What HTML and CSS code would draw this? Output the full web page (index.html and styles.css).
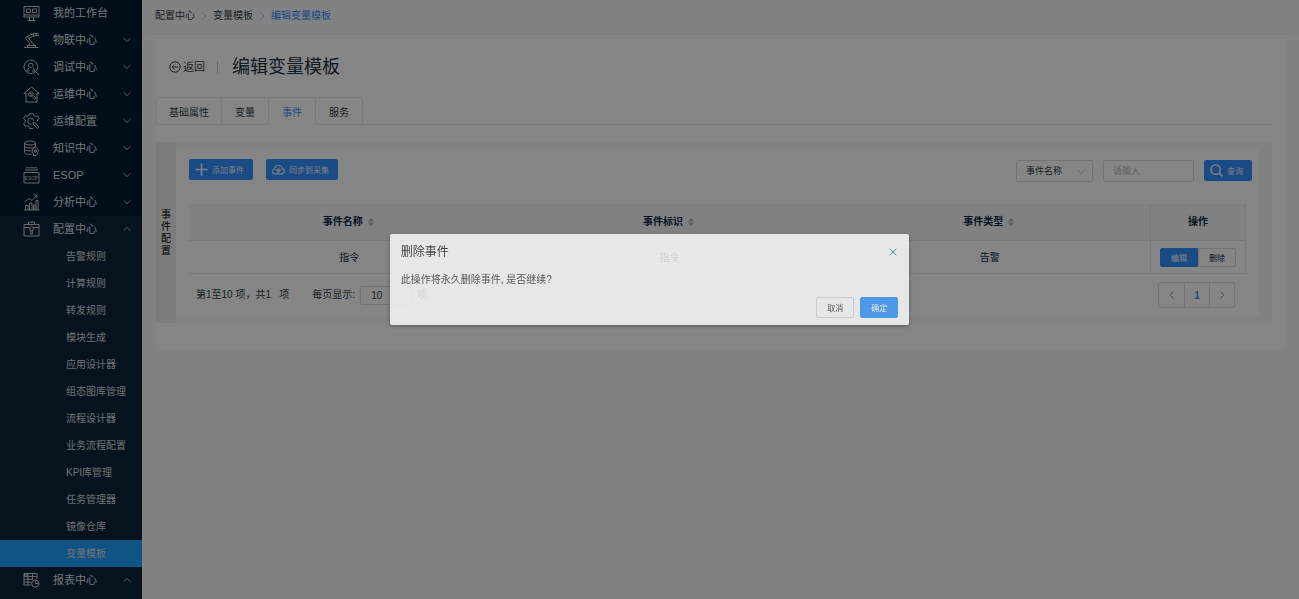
FILE: index.html
```html
<!DOCTYPE html>
<html lang="zh-CN">
<head>
    <meta charset="UTF-8">
    <meta name="viewport" content="width=device-width, initial-scale=1.0">
    <title>编辑变量模板</title>
    <link rel="stylesheet" href="styles.css">
</head>
<body>
    <svg class="defs" aria-hidden="true">
        <symbol id="down" viewBox="0 0 10 10"><path d="M1.5 3.2 5 6.6l3.5-3.4"/></symbol>
        <symbol id="up" viewBox="0 0 10 10"><path d="M1.5 6.8 5 3.4l3.5 3.4"/></symbol>
        <symbol id="left" viewBox="0 0 10 10"><path d="M6.6 1.5 3.2 5l3.4 3.5"/></symbol>
        <symbol id="right" viewBox="0 0 10 10"><path d="M3.4 1.5 6.8 5 3.4 8.5"/></symbol>
        <symbol id="sort" viewBox="0 0 8 10"><path d="M4 .8 7.2 4.4H.8zM4 9.2.8 5.6h6.4z"/></symbol>
    </svg>
    <div class="layout">
        <nav class="sidebar">
            <a href="#" class="menu-item">
                <svg class="menu-icon" viewBox="0 0 17 17"><path d="M1 1.500h15v10.500H1zM1 10h15M3.500 4h4v3.500h-4zM9.500 4h4v3.500h-4zM6.500 12v3M10.500 12v3M4.500 15.500h8"/></svg>
                <span>我的工作台</span>
            </a>
            <a href="#" class="menu-item">
                <svg class="menu-icon" viewBox="0 0 17 17"><path d="M1 15.500h14.500M4.500 15.500v-2h8v2M6 13.500c0-4 5-4 5 0M6.500 11 3.200 7.200M9 10.300 5.500 6.500M3 7.200C1.800 5.200 4.200 3.800 5.500 5.800M3.500 5 10.500 1.500M5.500 6.500l5.500-3M10.500 1.200v3l2.500-.5V1.500zM13 1.800l2.500-.8M13 3.500h3"/></svg>
                <span>物联中心</span>
                <svg class="arrow"><use href="#down"/></svg>
            </a>
            <a href="#" class="menu-item">
                <svg class="menu-icon" viewBox="0 0 17 17"><circle cx="7.800" cy="7.800" r="6.800"/><path d="m12.700 12.700 3.500 3.500M5.500 6.500a2.300 2.300 0 1 1 4.600 0c0 1.500-1.200 2-2.300 2s-2.300-.5-2.300-2M4 12.500v-2l2-1M11.600 12.500v-2l-2-1M4 12h2.500M9 12h2.600"/></svg>
                <span>调试中心</span>
                <svg class="arrow"><use href="#down"/></svg>
            </a>
            <a href="#" class="menu-item">
                <svg class="menu-icon" viewBox="0 0 17 17"><path d="M3 7.500H.8L8.500 1l7.700 6.500H14V16H3zM9 10.500l3 3M10.300 9.200l2.900 3-1.200 1.300M6 7l2 .3.300 2-1.500.8c2 1 4.200-1.500 2.700-3.600C8.700 5.400 7 5.600 6 7zM6 7c-1 1.200-.7 2.600.8 3.100"/></svg>
                <span>运维中心</span>
                <svg class="arrow"><use href="#down"/></svg>
            </a>
            <a href="#" class="menu-item">
                <svg class="menu-icon" viewBox="0 0 17 17"><path d="M10 15.500H6.500L6 13.500l-1.800-.9-2 .7L.7 10.500l1.500-1.500v-2L.7 5.500l1.500-2.700 2 .6L6 2.500 6.500.7h3.600l.6 1.800 1.700.9 2-.6 1.500 2.700L14.400 7v1.800M10.800 8a3 3 0 1 0-2.200 3M10 9.500l2 .3 3.800 4-1.400 1.700-4-4z"/></svg>
                <span>运维配置</span>
                <svg class="arrow"><use href="#down"/></svg>
            </a>
            <a href="#" class="menu-item">
                <svg class="menu-icon" viewBox="0 0 17 17"><ellipse cx="7" cy="3" rx="5.500" ry="2"/><path d="M1.500 3v3c0 2.700 11 2.700 11 0V3M1.500 6v3c0 1.500 4 2.200 7 1.700M1.500 9v3.500c0 1.500 4 2.200 7 1.700M12.500 6v1M10 8.500c2-1.500 5.500-.5 5.500 2 0 1.500-1 2-1 3l-1 2h-3v-2l-1.500-1zM11.500 10h2v2h-2z"/></svg>
                <span>知识中心</span>
                <svg class="arrow"><use href="#down"/></svg>
            </a>
            <a href="#" class="menu-item">
                <svg class="menu-icon" viewBox="0 0 17 17"><path d="M3 .8h11M2 3h13M1 5.500h15V16H1z"/><text x="8.500" y="13" text-anchor="middle">ESOP</text></svg>
                <span>ESOP</span>
                <svg class="arrow"><use href="#down"/></svg>
            </a>
            <a href="#" class="menu-item">
                <svg class="menu-icon" viewBox="0 0 17 17"><path d="M.8 16h15.500M2.500 16v-4.500H5V16M6.500 16V9H9v7M10.500 16v-5H12v5M13 16V6.500h2V16M1.500 8 6 4.500l3 2 4.500-5M10.800 1h3v3"/></svg>
                <span>分析中心</span>
                <svg class="arrow"><use href="#down"/></svg>
            </a>
            <div class="menu-group">
                <a href="#" class="menu-item">
                    <svg class="menu-icon" viewBox="0 0 17 17"><path d="M1 3.500h15V15H1zM5.500 3.500V1.200h6v2.300M1 6.500h5.500M10.500 6.500H16M8.500 5.200l2 1.600-.9 3H7.400l-.9-3zM7.700 10v3h1.600v-3"/></svg>
                    <span>配置中心</span>
                    <svg class="arrow"><use href="#up"/></svg>
                </a>
                <a href="#" class="sub-item">告警规则</a>
                <a href="#" class="sub-item">计算规则</a>
                <a href="#" class="sub-item">转发规则</a>
                <a href="#" class="sub-item">模块生成</a>
                <a href="#" class="sub-item">应用设计器</a>
                <a href="#" class="sub-item">组态图库管理</a>
                <a href="#" class="sub-item">流程设计器</a>
                <a href="#" class="sub-item">业务流程配置</a>
                <a href="#" class="sub-item">KPI库管理</a>
                <a href="#" class="sub-item">任务管理器</a>
                <a href="#" class="sub-item">镜像仓库</a>
                <a href="#" class="sub-item active">变量模板</a>
            </div>
            <div class="menu-group last">
                <a href="#" class="menu-item">
                    <svg class="menu-icon" viewBox="0 0 17 17"><path d="M8.500 13H1V1.500h13V7M1 4.500h13M1 7.300h9M1 10.200h7.500M5 1.500V13M9.500 1.500v6M1.500 2h3v2h-3z"/><circle cx="12.300" cy="11.500" r="3.600"/><path d="M12.300 8v3.500h3.600"/></svg>
                    <span>报表中心</span>
                    <svg class="arrow"><use href="#up"/></svg>
                </a>
            </div>
        </nav>

        <main class="main">
            <div class="breadcrumb">
                <a href="#">配置中心</a>
                <svg class="crumb-sep"><use href="#right"/></svg>
                <a href="#">变量模板</a>
                <svg class="crumb-sep"><use href="#right"/></svg>
                <a href="#" class="current">编辑变量模板</a>
            </div>

            <div class="card">
                <div class="page-header">
                    <a href="#" class="back">
                        <svg class="back-icon" viewBox="0 0 12 12"><circle cx="6" cy="6" r="5.200"/><path d="M9 6H3.200M5.500 3.700 3.200 6l2.300 2.300"/></svg>
                        返回
                    </a>
                    <h1>编辑变量模板</h1>
                </div>

                <div class="tabs">
                    <button class="tab">基础属性</button>
                    <button class="tab">变量</button>
                    <button class="tab active">事件</button>
                    <button class="tab">服务</button>
                </div>

                <section class="panel">
                    <div class="panel-side"><span>事件配置</span></div>
                    <div class="panel-body">
                        <div class="toolbar">
                            <button class="btn primary">
                                <svg class="btn-icon plus" viewBox="0 0 12 12"><path d="M6 .5v11M.5 6h11"/></svg>
                                添加事件
                            </button>
                            <button class="btn primary sync">
                                <svg class="btn-icon" viewBox="0 0 12 12"><path d="M3 10C-.2 10-.2 6 2.500 5.700 2.500 1.500 8.800 1 9.300 5.200c3 .3 3 4.800 0 4.800zM4 7.500c0-2.500 3.500-2.500 4-.3"/><circle cx="6" cy="7.700" r="1"/></svg>
                                同步到采集
                            </button>
                            <div class="search">
                                <div class="select-wrap">
                                    <select aria-label="查询字段">
                                        <option>事件名称</option>
                                    </select>
                                    <svg class="select-arrow"><use href="#down"/></svg>
                                </div>
                                <input type="text" placeholder="请输入" aria-label="查询内容">
                                <button class="btn primary query">
                                    <svg class="btn-icon glass" viewBox="0 0 12 12"><circle cx="5.200" cy="5.200" r="4.300"/><path d="m8.400 8.400 3 3"/></svg>
                                    查询
                                </button>
                            </div>
                        </div>

                        <table>
                            <thead>
                                <tr>
                                    <th>事件名称<svg class="sort"><use href="#sort"/></svg></th>
                                    <th>事件标识<svg class="sort"><use href="#sort"/></svg></th>
                                    <th>事件类型<svg class="sort"><use href="#sort"/></svg></th>
                                    <th class="action">操作</th>
                                </tr>
                            </thead>
                            <tbody>
                                <tr>
                                    <td>指令</td>
                                    <td>指令</td>
                                    <td>告警</td>
                                    <td class="action">
                                        <div class="btn-group">
                                            <button class="edit">编辑</button>
                                            <button>删除</button>
                                        </div>
                                    </td>
                                </tr>
                            </tbody>
                        </table>

                        <div class="table-footer">
                            <span>第1至10 项，共1&nbsp;&nbsp; 项</span>
                            <label for="pageSize">每页显示:</label>
                            <div class="select-wrap size">
                                <select id="pageSize">
                                    <option>10</option>
                                </select>
                                <svg class="select-arrow"><use href="#down"/></svg>
                            </div>
                            <span>项</span>
                            <div class="pager">
                                <button aria-label="上一页"><svg><use href="#left"/></svg></button>
                                <button class="current">1</button>
                                <button aria-label="下一页"><svg><use href="#right"/></svg></button>
                            </div>
                        </div>
                    </div>
                </section>
            </div>
        </main>
    </div>

    <div class="overlay">
        <div class="dialog" role="dialog" aria-labelledby="dialogTitle">
            <div class="dialog-header">
                <h2 id="dialogTitle">删除事件</h2>
                <button class="close" aria-label="关闭"><svg viewBox="0 0 8 8"><path d="m.8.8 6.400 6.400M7.200.8.8 7.200"/></svg></button>
            </div>
            <p>此操作将永久删除事件, 是否继续?</p>
            <div class="dialog-footer">
                <button class="btn">取消</button>
                <button class="btn confirm">确定</button>
            </div>
        </div>
    </div>
</body>
</html>
```
FILE: styles.css
```css
* {
    box-sizing: border-box;
}

body {
    margin: 0;
    font-family: "Liberation Sans", "Noto Sans CJK SC", sans-serif;
    font-size: 10px;
    line-height: 14px;
    color: #303f4a;
    background-color: #f6f9fc;
}

a {
    color: inherit;
    text-decoration: none;
}

button, input, select {
    font-family: inherit;
    font-size: 10px;
    color: inherit;
    margin: 0;
    padding: 0;
    border: 0;
    background: none;
}

button {
    cursor: pointer;
}

svg {
    fill: none;
    stroke: currentColor;
    stroke-width: 1;
    flex: none;
}

.defs {
    display: none;
}

.layout {
    display: flex;
    height: 100vh;
    overflow: hidden;
}

/* Sidebar */
.sidebar {
    display: flex;
    flex-direction: column;
    flex: none;
    width: 142px;
    background-color: #021a2e;
    color: #dce0e4;
}

.menu-item {
    display: flex;
    align-items: center;
    height: 27px;
    padding: 0 10px 1px 23px;
    font-size: 11px;
    flex: none;
}

.menu-icon {
    width: 17px;
    height: 17px;
    margin-right: 13px;
    color: #c3c9ce;
}

.menu-icon text {
    font-size: 5px;
    fill: currentColor;
    stroke: none;
}

.arrow {
    width: 10px;
    height: 10px;
    margin-left: auto;
    color: #a9b0b7;
}

.menu-group {
    background-color: #0d253a;
}

.menu-group.last {
    flex: 1;
}

.sub-item {
    display: block;
    height: 27px;
    line-height: 28px;
    padding-left: 66px;
    color: #d3d9de;
}

.sub-item.active {
    background-color: #20a0ff;
}

/* Content */
.main {
    flex: 1;
    min-width: 0;
}

.breadcrumb {
    display: flex;
    align-items: center;
    gap: 4px;
    height: 34px;
    padding: 0 13px 1px;
    border-bottom: 1px solid #eef0f2;
}

.breadcrumb .current {
    color: #3490ff;
}

.crumb-sep {
    width: 10px;
    height: 10px;
    color: #b4bbc2;
}

.card {
    margin: 5px 14px 0;
    padding: 12px 13px 27px 0;
    background-color: #fff;
}

.page-header {
    display: flex;
    align-items: center;
    height: 31px;
    padding-left: 13px;
}

.back {
    display: flex;
    align-items: center;
    gap: 2px;
    font-size: 11px;
    padding-right: 13px;
    background: linear-gradient(#c5cacf, #c5cacf) right center / 1px 12px no-repeat;
}

.back-icon {
    width: 12px;
    height: 12px;
}

h1 {
    margin: 0 0 0 14px;
    font-size: 18px;
    line-height: 28px;
    font-weight: normal;
    color: #1b3344;
}

.tabs {
    display: flex;
    margin-top: 15px;
    border-bottom: 1px solid #ebedf0;
}

.tab {
    min-width: 47px;
    height: 28px;
    padding: 0 12px;
    margin-bottom: -1px;
    border: 1px solid #e8eaed;
    border-left-width: 0;
}

.tab:first-child {
    border-left-width: 1px;
    border-radius: 3px 0 0 0;
}

.tab:last-child {
    border-radius: 0 3px 0 0;
}

.tab.active {
    color: #3490ff;
    border-bottom-color: #fff;
}

.panel {
    display: flex;
    margin-top: 17px;
    padding: 7px 13px 7px 0;
    background-color: #f9f9f9;
}

.panel-side {
    display: flex;
    align-items: center;
    justify-content: center;
    width: 20px;
    margin: -7px 0;
    background-color: #eee;
    border-radius: 3px 0 0 3px;
}

.panel-side span {
    width: 10px;
    line-height: 12px;
    color: #000;
}

.panel-body {
    flex: 1;
    min-width: 0;
    padding: 10px 13px 8px;
    background-color: #fff;
}

/* Buttons */
.btn {
    display: flex;
    align-items: center;
    justify-content: center;
    gap: 4px;
    height: 21px;
    padding: 0 10px;
    font-size: 8px;
    border: 1px solid #d8dce5;
    border-radius: 2px;
}

.btn.primary {
    height: 21px;
    padding: 0 9px 0 6px;
    color: #e8f2ff;
    background-color: #3490ff;
    border: 0;
}

.btn-icon {
    width: 13px;
    height: 13px;
}

.btn-icon.plus, .btn-icon.glass {
    stroke-width: 1.5;
}

.toolbar {
    display: flex;
    align-items: flex-start;
    margin-right: -6px;
    height: 45px;
}

.sync {
    margin-left: 13px;
}

.search {
    display: flex;
    gap: 10px;
    margin: 1px 0 0 auto;
}

.search select, .search input {
    height: 22px;
    padding: 0 9px;
    border: 1px solid #d8dce5;
    border-radius: 2px;
    background-color: #fff;
    font-size: 9px;
}

.search select {
    width: 77px;
}

.search input {
    width: 91px;
}

input::placeholder {
    color: #b4bccc;
    opacity: 1;
}

.select-wrap {
    position: relative;
    height: 22px;
}

select {
    appearance: none;
}

.select-arrow {
    position: absolute;
    right: 7px;
    top: 7px;
    width: 10px;
    height: 10px;
    color: #b4bccc;
    pointer-events: none;
}

/* Table */
table {
    width: 100%;
    table-layout: fixed;
    border-collapse: separate;
    border-spacing: 0;
    text-align: center;
}

th {
    height: 37px;
    padding: 0;
    background-color: #f5f8fb;
    border-bottom: 1px solid #e6ebf2;
    color: #0d2b45;
}

th:not(:last-child) {
    border-right: 1px solid #f0f3f7;
}

td {
    height: 33px;
    padding: 1px 0 0;
    border-bottom: 1px solid #e6ebf2;
    color: #0d2b45;
}

.action {
    width: 96px;
    border-left: 1px solid #e6ebf2;
    border-right: 1px solid #e6ebf2;
}

.sort {
    width: 8px;
    height: 10px;
    margin-left: 4px;
    vertical-align: -2px;
    fill: #b4bccc;
    stroke: none;
}

.btn-group {
    display: flex;
    justify-content: center;
}

.btn-group button {
    width: 38px;
    height: 19px;
    font-size: 8px;
    border: 1px solid #d8dce5;
    border-radius: 0 2px 2px 0;
}

.btn-group .edit {
    color: #fff;
    background-color: #3490ff;
    border-color: #3490ff;
    border-radius: 2px 0 0 2px;
}

.table-footer {
    display: flex;
    align-items: center;
    height: 26px;
    margin-top: 8px;
    padding: 0 11px 0 7px;
}

.table-footer label {
    margin-left: 23px;
}

.size {
    height: 19px;
    margin: 0 4px 0 5px;
}

.size select {
    width: 53px;
    height: 19px;
    padding-left: 10px;
    border: 1px solid #d8dce5;
    border-radius: 2px;
}

.size .select-arrow {
    top: 5px;
}

.pager {
    display: flex;
    margin-left: auto;
    border: 1px solid #d8e0ec;
    border-radius: 2px;
}

.pager button {
    width: 25px;
    height: 24px;
}

.pager button + button {
    border-left: 1px solid #d8e0ec;
}

.pager svg {
    display: block;
    width: 10px;
    height: 10px;
    margin: 0 auto;
    color: #8d98a5;
}

.pager .current {
    color: #3490ff;
    font-weight: bold;
}

/* Confirm dialog */
.overlay {
    position: fixed;
    inset: 0;
    display: flex;
    align-items: center;
    justify-content: center;
    padding-bottom: 40px;
    background-color: rgba(0, 0, 0, 0.48);
}

.dialog {
    width: 40%;
    padding: 11px 11px 7px;
    background-color: #fff;
    border-radius: 2px;
    box-shadow: 0 1px 4px rgba(0, 0, 0, 0.4);
    color: #484c52;
    opacity: 0.8;
}

.dialog-header {
    display: flex;
    align-items: center;
    justify-content: space-between;
}

.dialog h2 {
    margin: 0;
    font-size: 12px;
    line-height: 14px;
    font-weight: normal;
    color: #303133;
}

.close {
    display: flex;
    padding: 1px;
    color: #2b8fc4;
}

.close svg {
    width: 8px;
    height: 8px;
}

.dialog p {
    margin: 14px 0 10px;
}

.dialog-footer {
    display: flex;
    justify-content: flex-end;
    gap: 6px;
}

.dialog-footer .btn {
    width: 38px;
    padding: 0;
}

.dialog-footer .confirm {
    color: #fff;
    background-color: #409eff;
    border-color: #409eff;
}
```
